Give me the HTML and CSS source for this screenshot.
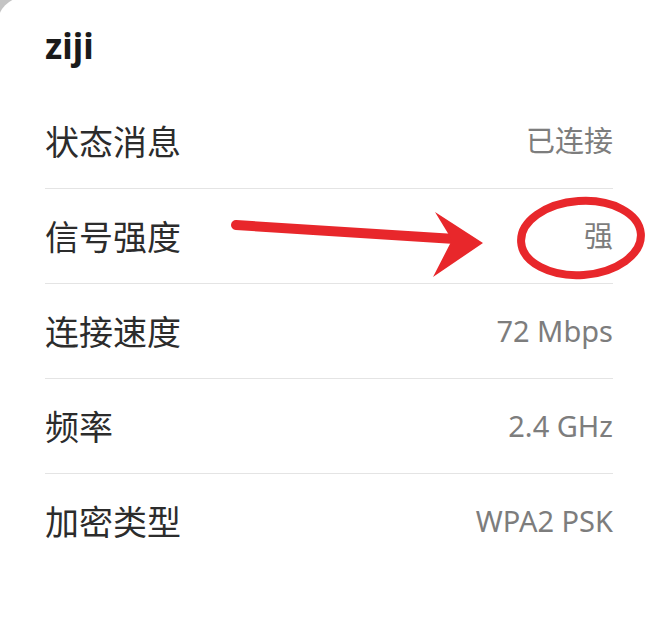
FILE: index.html
```html
<!DOCTYPE html>
<html lang="zh-CN">
<head>
<meta charset="utf-8">
<title>ziji</title>
<link rel="stylesheet" href="styles.css">
</head>
<body>
<div class="card">
  <h1 class="title">ziji</h1>
  <div class="list">
    <div class="row"><span class="label">状态消息</span><span class="value">已连接</span></div>
    <div class="row"><span class="label">信号强度</span><span class="value">强</span></div>
    <div class="row"><span class="label">连接速度</span><span class="value">72 Mbps</span></div>
    <div class="row"><span class="label">频率</span><span class="value">2.4 GHz</span></div>
    <div class="row"><span class="label">加密类型</span><span class="value">WPA2 PSK</span></div>
  </div>
</div>
<svg class="marks" width="650" height="638" viewBox="0 0 650 638">
  <line x1="236" y1="225" x2="455" y2="239" stroke="#e8272b" stroke-width="10" stroke-linecap="round"/>
  <path d="M435 212 L483 243 L433 277 L452 240 Z" fill="#e8272b"/>
  <ellipse cx="581" cy="238" rx="60" ry="37" fill="none" stroke="#e8272b" stroke-width="8" transform="rotate(-4 581 238)"/>
</svg>
</body>
</html>
```
FILE: styles.css
```css
html, body {
  margin: 0;
  padding: 0;
}
body {
  background: #c4c4c4;
  width: 650px;
  height: 638px;
  overflow: hidden;
  position: relative;
  font-family: "Noto Sans", "Noto Sans CJK SC", sans-serif;
}
.card {
  background: #ffffff;
  margin: -3px -20px 0 -3px;
  border-top-left-radius: 28px;
  height: 641px;
  padding: 0 57px 0 48px;
  overflow: hidden;
}
.title {
  margin: 0;
  padding-top: 29px;
  font-size: 35px;
  line-height: 40px;
  font-weight: 700;
  color: #1a1a1a;
  height: 68px;
}
.list {
  display: flex;
  flex-direction: column;
}
.row {
  display: flex;
  justify-content: space-between;
  align-items: center;
  height: 94px;
  border-bottom: 1px solid #e4e4e4;
}
.row:last-child {
  border-bottom: none;
}
.label {
  font-family: "Noto Sans CJK SC", sans-serif;
  font-size: 34px;
  color: #2c2c2c;
  line-height: 40px;
}
.value {
  font-family: "Noto Sans", "Noto Sans CJK SC", sans-serif;
  font-size: 29px;
  color: #7d7d7d;
  line-height: 40px;
}
.marks {
  position: absolute;
  left: 0;
  top: 0;
  pointer-events: none;
}
```
